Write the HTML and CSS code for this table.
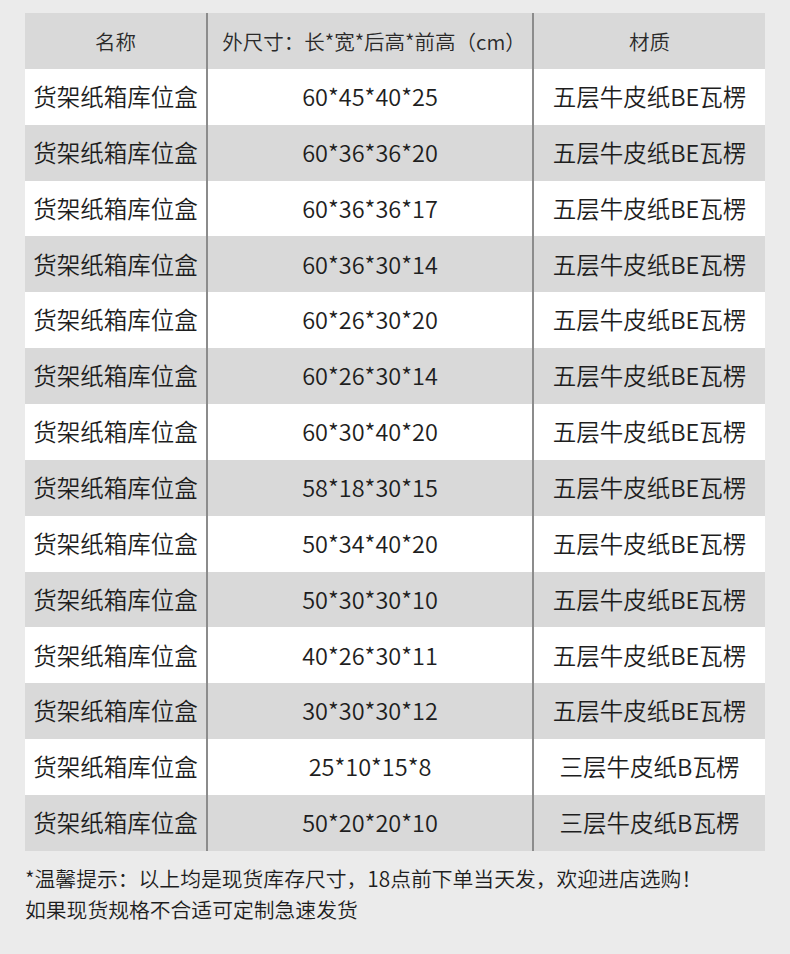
FILE: index.html
```html
<!DOCTYPE html>
<html lang="zh-CN">
<head>
<meta charset="utf-8">
<title>货架纸箱库位盒尺寸表</title>
<link rel="stylesheet" href="styles.css">
</head>
<body>
<div class="page">
  <table class="spec">
    <colgroup><col class="c1"><col class="c2"><col class="c3"></colgroup>
    <thead>
      <tr><th>名称</th><th class="h2">外尺寸：长*宽*后高*前高（cm）</th><th>材质</th></tr>
    </thead>
    <tbody>
      <tr><td>货架纸箱库位盒</td><td>60*45*40*25</td><td>五层牛皮纸BE瓦楞</td></tr>
      <tr><td>货架纸箱库位盒</td><td>60*36*36*20</td><td>五层牛皮纸BE瓦楞</td></tr>
      <tr><td>货架纸箱库位盒</td><td>60*36*36*17</td><td>五层牛皮纸BE瓦楞</td></tr>
      <tr><td>货架纸箱库位盒</td><td>60*36*30*14</td><td>五层牛皮纸BE瓦楞</td></tr>
      <tr><td>货架纸箱库位盒</td><td>60*26*30*20</td><td>五层牛皮纸BE瓦楞</td></tr>
      <tr><td>货架纸箱库位盒</td><td>60*26*30*14</td><td>五层牛皮纸BE瓦楞</td></tr>
      <tr><td>货架纸箱库位盒</td><td>60*30*40*20</td><td>五层牛皮纸BE瓦楞</td></tr>
      <tr><td>货架纸箱库位盒</td><td>58*18*30*15</td><td>五层牛皮纸BE瓦楞</td></tr>
      <tr><td>货架纸箱库位盒</td><td>50*34*40*20</td><td>五层牛皮纸BE瓦楞</td></tr>
      <tr><td>货架纸箱库位盒</td><td>50*30*30*10</td><td>五层牛皮纸BE瓦楞</td></tr>
      <tr><td>货架纸箱库位盒</td><td>40*26*30*11</td><td>五层牛皮纸BE瓦楞</td></tr>
      <tr><td>货架纸箱库位盒</td><td>30*30*30*12</td><td>五层牛皮纸BE瓦楞</td></tr>
      <tr><td>货架纸箱库位盒</td><td>25*10*15*8</td><td>三层牛皮纸B瓦楞</td></tr>
      <tr><td>货架纸箱库位盒</td><td>50*20*20*10</td><td>三层牛皮纸B瓦楞</td></tr>
    </tbody>
  </table>
  <div class="note">
    <p>*温馨提示：以上均是现货库存尺寸，18点前下单当天发，欢迎进店选购！</p>
    <p>如果现货规格不合适可定制急速发货</p>
  </div>
</div>
</body>
</html>
```
FILE: styles.css
```css
html, body {
  margin: 0;
  padding: 0;
  background: #ebebeb;
}
body {
  font-family: "Noto Sans CJK SC", "Noto Sans", sans-serif;
  font-weight: 350;
  color: #1e1e1e;
}
.page {
  padding: 13px 25px 0 25px;
}
.spec {
  width: 740px;
  border-collapse: collapse;
  table-layout: fixed;
}
.spec .c1 { width: 182px; }
.spec .c2 { width: 326px; }
.spec .c3 { width: 232px; }
.spec th,
.spec td {
  height: 55.87px;
  padding: 0;
  text-align: center;
  vertical-align: middle;
  font-size: 23.5px;
  line-height: 1;
  white-space: nowrap;
}
.spec th {
  font-weight: 350;
  font-size: 20.5px;
  color: #2a2a2a;
  background: #d9d9d9;
}
.spec .h2 {
  padding-left: 8px;
}
.spec th + th,
.spec td + td {
  border-left: 2px solid #8c8c8c;
}
.spec tbody tr:nth-child(odd) td { background: #ffffff; }
.spec tbody tr:nth-child(even) td { background: #d9d9d9; }
.note {
  margin-top: 12px;
}
.note p {
  margin: 0;
  font-size: 20.8px;
  line-height: 31px;
  color: #1e1e1e;
}
```
